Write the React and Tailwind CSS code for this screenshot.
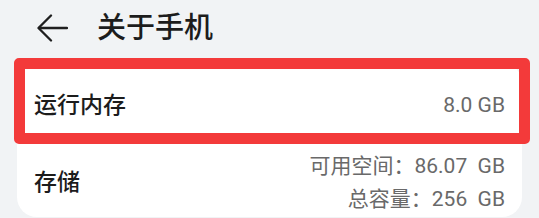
import React from 'react';

function BackArrow() {
    return (
        <svg width="31" height="28" viewBox="0 0 31 28" fill="none" stroke="#1f1f1f" strokeWidth="2.3" strokeLinecap="round" strokeLinejoin="round">
            <path d="M2 14 H30" />
            <path d="M14 1.5 L1.5 14 L14 26.5" />
        </svg>
    );
}

export default function App() {
    return (
        <div
            className="relative w-[539px] h-[218px] overflow-hidden bg-[#f1f3f5]"
            style={{fontFamily: 'Roboto, "Noto Sans CJK SC", sans-serif'}}
        >
            {/* header */}
            <div className="flex items-center h-[56px] pl-[37px]">
                <BackArrow />
                <h1 className="ml-[29px] text-[29px] font-medium text-[#1c1c1c] leading-none">关于手机</h1>
            </div>

            {/* card */}
            <div className="mx-[17px] mt-[7px] rounded-[20px] bg-white">
                <div className="flex items-center justify-between h-[86px] px-[17px]">
                    <span className="text-[23px] font-medium text-[#1c1c1c]">运行内存</span>
                    <span className="text-[21px] text-[#696969]">8.0 GB</span>
                </div>
                <div className="flex items-center justify-between h-[68px] px-[17px]">
                    <span className="text-[23px] font-medium text-[#1c1c1c]">存储</span>
                    <div className="flex flex-col items-end text-[21px] text-[#696969] leading-[33px]">
                        <span>可用空间：86.07&nbsp; GB</span>
                        <span>总容量：256&nbsp; GB</span>
                    </div>
                </div>
            </div>

            {/* highlight annotation */}
            <div className="absolute left-[14px] top-[58px] w-[516px] h-[86px] border-[11px] border-[#f33a3a] rounded-[5px]"></div>
        </div>
    );
}
